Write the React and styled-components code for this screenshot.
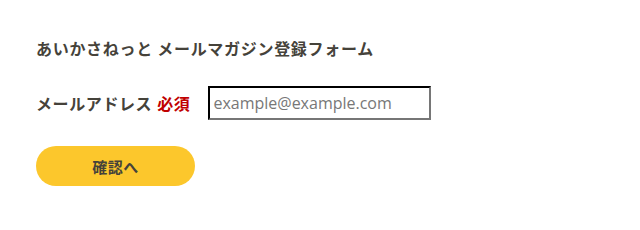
import styled, { createGlobalStyle } from 'styled-components'

const Global = createGlobalStyle`
  body {
    margin: 0;
    background: #fff;
    font-family: "Noto Sans CJK JP", "Noto Sans", sans-serif;
    color: #45423a;
  }
`

const Form = styled.form`
  padding: 36px;
  display: flex;
  flex-direction: column;
`

const Title = styled.h2`
  margin: 0;
  font-size: 16px;
  font-weight: 700;
  letter-spacing: 0.7px;
  line-height: 24px;
`

const Row = styled.div`
  display: flex;
  align-items: center;
  margin-top: 26px;
`

const Label = styled.label`
  font-size: 16px;
  font-weight: 700;
  letter-spacing: 0.6px;
  margin-right: 18px;
`

const Required = styled.span`
  color: #c00000;
  margin-left: 5px;
`

const Input = styled.input`
  width: 223px;
  height: 34px;
  box-sizing: border-box;
  border: 2px inset #767676;
  border-color: #222 #767676 #767676 #222;
  padding: 0 3px;
  font-family: "Open Sans", "Noto Sans", sans-serif;
  font-size: 16px;
  outline: none;
  &::placeholder {
    color: #777;
  }
`

const Button = styled.button`
  margin-top: 26px;
  width: 159px;
  height: 40px;
  border: none;
  border-radius: 20px;
  background: #fcc72c;
  color: #45423a;
  font-family: inherit;
  font-size: 15px;
  font-weight: 700;
  letter-spacing: 0.5px;
  cursor: pointer;
`

export default function App() {
  return (
    <>
      <Global />
      <Form onSubmit={(e) => e.preventDefault()}>
        <Title>あいかさねっと メールマガジン登録フォーム</Title>
        <Row>
          <Label htmlFor="email">
            メールアドレス<Required>必須</Required>
          </Label>
          <Input id="email" type="email" placeholder="example@example.com" />
        </Row>
        <Button type="submit">確認へ</Button>
      </Form>
    </>
  )
}
